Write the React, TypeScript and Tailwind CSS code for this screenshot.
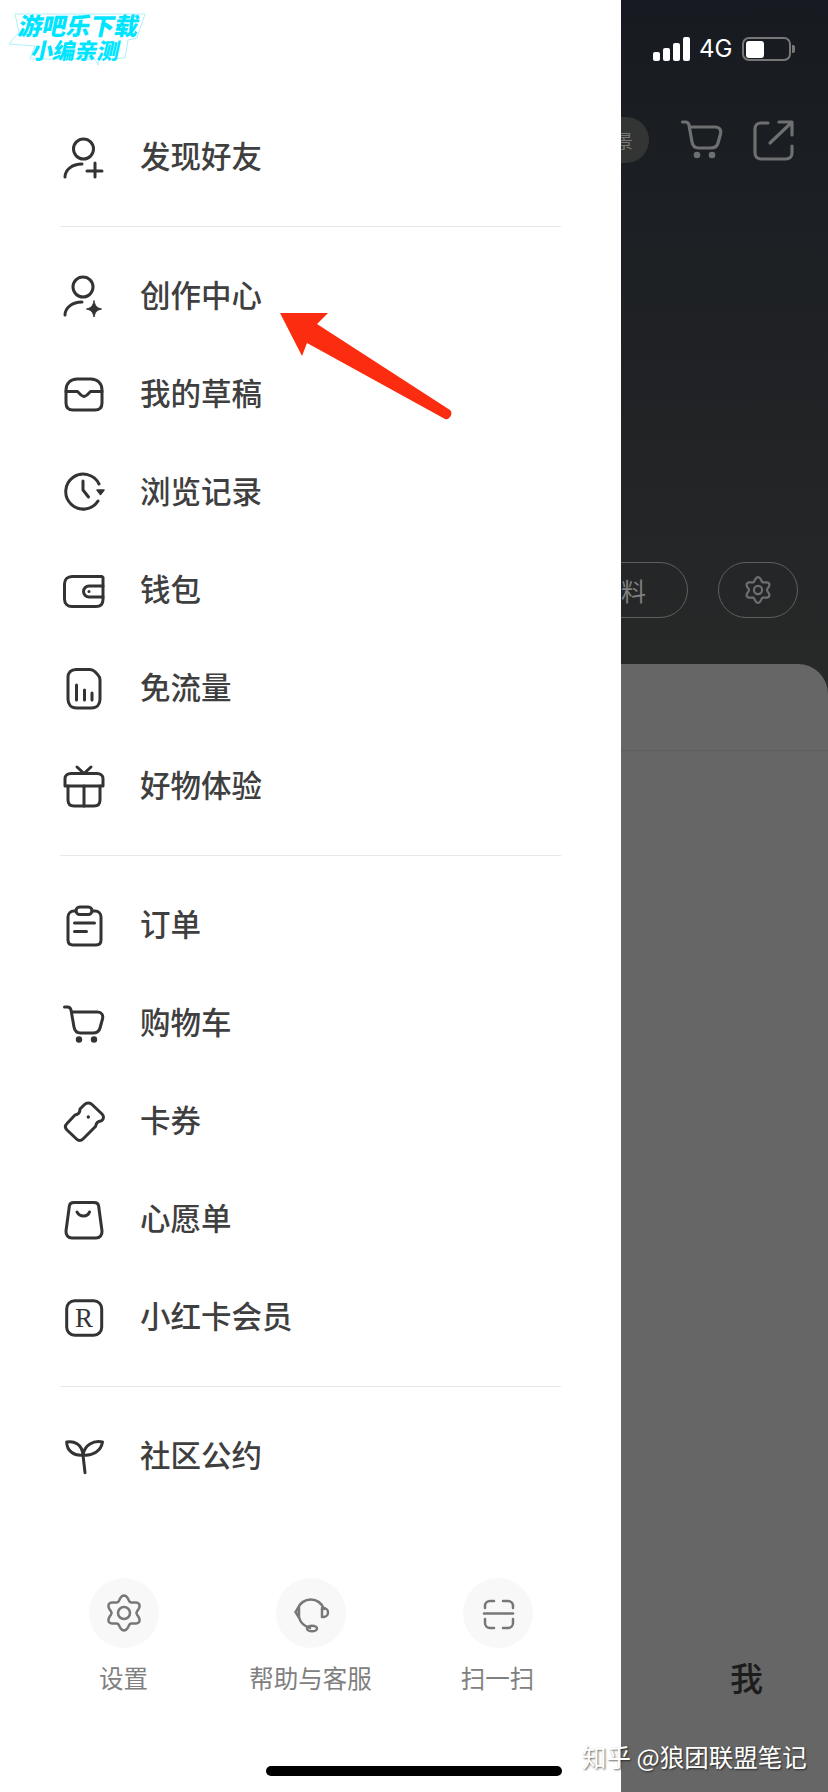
import type { ReactNode } from "react";

const flower = (cx: number, cy: number, r: number, amp: number) => {
  const pts: string[] = [];
  for (let i = 0; i < 120; i++) {
    const t = (i / 120) * Math.PI * 2;
    const rad = r + amp * Math.cos(6 * t);
    pts.push(`${(cx + rad * Math.sin(t)).toFixed(2)} ${(cy - rad * Math.cos(t)).toFixed(2)}`);
  }
  return `M${pts.join("L")}Z`;
};

function Icon({ children, strokeWidth = 3, color = "#333", size = 44 }: { children: ReactNode; strokeWidth?: number; color?: string; size?: number }) {
  return (
    <svg width={size} height={size} viewBox="0 0 44 44" fill="none" stroke={color} strokeWidth={strokeWidth} strokeLinecap="round" strokeLinejoin="round" className="shrink-0">
      {children}
    </svg>
  );
}

const menuIcons: Record<string, ReactNode> = {
  friend: (
    <>
      <circle cx="21.5" cy="14" r="10" />
      <path d="M3 42c0-7 7-13 17-13" />
      <path d="M25 36h15M33 28v14" />
    </>
  ),
  create: (
    <>
      <circle cx="21" cy="13" r="10" />
      <path d="M3 41c0-7 7-13 17-13" />
      <path d="M32 27c1 5 3 7 7.500 8-4.500 1-6.500 3-7.500 8-1-5-3-7-7.500-8 4.500-1 6.500-3 7.500-8z" fill="#333" strokeWidth="1" />
    </>
  ),
  draft: (
    <>
      <path d="M15 7h14c6.500 0 11 4.500 11 11v13c0 4.500-2.500 7-7 7H11c-4.500 0-7-2.500-7-7V18C4 11.500 8.500 7 15 7z" />
      <path d="M4 19.500h11.500l3.500 3.500c2 1.800 4 1.800 6 0l3.500-3.500H40" />
    </>
  ),
  history: (
    <>
      <path d="M37 14A17.500 17.500 0 1 0 36 31" />
      <path d="M21 11v9l5.500 7" />
      <path d="M35 20h7l-3.500 4.500z" fill="#333" strokeWidth="1.500" />
    </>
  ),
  wallet: (
    <>
      <path d="M40 8.500H10c-4.500 0-7.500 3-7.500 7.500v15c0 4.500 3 7.500 7.500 7.500h24c4.500 0 7-2.500 7-7V9.500z" />
      <path d="M41 18H27c-3 0-5.500 2.500-5.500 5.500S24 29 27 29h14" />
      <circle cx="27" cy="23.500" r="1.500" fill="#333" stroke="none" />
    </>
  ),
  data: (
    <>
      <path d="M14 3.500h14c2 0 3.500.7 5 2.200l3 3.300c1.500 1.500 2 3 2 5V33c0 5.500-3 9-8.500 9h-15C9 42 6 38.500 6 33V11.500C6 6.500 9 3.500 14 3.500z" />
      <path d="M14.500 19v15M22.500 24v10M30 27v7" />
    </>
  ),
  gift: (
    <>
      <path d="M9 9.500h26c3.500 0 6 2 6 5v7.500H3v-7.500c0-3 2.500-5 6-5z" />
      <path d="M6 22v14c0 4 2 6 6 6h20c4 0 6-2 6-6V22" />
      <path d="M22 22V42M15 3l7 6.500L29 3" />
    </>
  ),
  order: (
    <>
      <path d="M14 8h-2c-3.500 0-6 2.500-6 6v23c0 3.500 1.500 5 5 5h23c3.500 0 5-1.500 5-5V14c0-3.500-2.500-6-6-6h-3" />
      <rect x="14" y="4" width="16" height="7.500" rx="3.700" />
      <path d="M12.500 20h20M12.500 28.500h12" />
    </>
  ),
  cart: (
    <>
      <path d="M2.500 6h3c2 0 3 1 3.500 3l3 17c.7 4 3 6 6.500 6h12.500c4 0 6.200-2 7-5l2.500-9c1-4-1-7-5-7H9.500" />
      <circle cx="17" cy="38.500" r="1.700" fill="#333" />
      <circle cx="32" cy="38.500" r="1.700" fill="#333" />
    </>
  ),
  coupon: (
    <>
      <path d="M5 24.500l8-8.500c3.500-.3 5-2.500 5-6l4.500-4.500c2-2 5.500-2.200 7.500 0l10 9.500c2 2 2 4.800-.3 6.700-3.500.3-5.700 2-6 5.500L21 40c-2 2-4.500 2-6.500 0L5 31c-2-2-2-4.500 0-6.500z" />
      <circle cx="26.300" cy="18" r="1.700" fill="#333" stroke="none" />
    </>
  ),
  wish: (
    <>
      <path d="M12 5.500h20c3 0 4.500 1.500 4.700 4L40 34c.3 4-2 7-6 7H10c-4 0-6.300-3-6-7L7.300 9.500c.2-2.500 1.700-4 4.700-4z" />
      <path d="M15 15c1.500 2.700 3.500 4 6.500 4s5-1.300 6-4" />
    </>
  ),
  member: (
    <>
      <rect x="4.700" y="5.700" width="35" height="34.500" rx="8" />
      <text x="22" y="32" textAnchor="middle" fontSize="27" fill="#333" stroke="none" fontFamily="'Liberation Serif', serif">R</text>
    </>
  ),
  rule: (
    <>
      <path d="M4.700 8c7-1.500 15.300 2 16.300 13-9 1-16.300-4-16.300-13z" />
      <path d="M40.500 8c-9-2-18 3-19.500 13 10 1 18-4 19.500-13z" />
      <path d="M21 21l2 17.700" />
    </>
  ),
};

const sections = [
  [{ icon: "friend", label: "发现好友" }],
  [
    { icon: "create", label: "创作中心" },
    { icon: "draft", label: "我的草稿" },
    { icon: "history", label: "浏览记录" },
    { icon: "wallet", label: "钱包" },
    { icon: "data", label: "免流量" },
    { icon: "gift", label: "好物体验" },
  ],
  [
    { icon: "order", label: "订单" },
    { icon: "cart", label: "购物车" },
    { icon: "coupon", label: "卡券" },
    { icon: "wish", label: "心愿单" },
    { icon: "member", label: "小红卡会员" },
  ],
  [{ icon: "rule", label: "社区公约" }],
];

function Section({ index }: { index: number }) {
  return (
    <div className={index > 0 ? "mt-[20px] border-t border-[#e8e8e8] pt-[20px]" : ""}>
      {sections[index].map((item) => (
        <div key={item.label} className="flex h-[98px] items-center">
          <div className="ml-[2px] mr-[34px] flex">
            <Icon>{menuIcons[item.icon]}</Icon>
          </div>
          <span className="pb-[4px] text-[30.5px] font-medium leading-none text-[#3f3f3f]">{item.label}</span>
        </div>
      ))}
    </div>
  );
}

function Drawer() {
  const shortcuts = [
    {
      label: "设置",
      icon: (
        <>
          <path d={flower(22, 22, 15, 2.500)} />
          <circle cx="22" cy="22" r="6" />
        </>
      ),
    },
    {
      label: "帮助与客服",
      icon: (
        <>
          <path d="M8.500 18a14 14 0 0 1 26.500 0" />
          <path d="M10 16l-3.500 5 3.500 5.500z" />
          <path d="M33 17h1.500a4.500 4.500 0 0 1 0 9H33z" />
          <path d="M10 26.500c1.500 5 6 9 11 10.500" />
          <ellipse cx="23" cy="37.500" rx="5" ry="2.800" />
        </>
      ),
    },
    {
      label: "扫一扫",
      icon: (
        <>
          <path d="M9 17v-2a5 5 0 0 1 5-5h4M27 10h5a5 5 0 0 1 5 5v2" />
          <path d="M8 22.500h29" />
          <path d="M9 28v4a5 5 0 0 0 5 5h4M27 37h5a5 5 0 0 0 5-5v-4" />
        </>
      ),
    },
  ];

  return (
    <aside className="flex w-[621px] shrink-0 flex-col bg-white">
      <nav className="px-[60px] pt-[108px]">
        {sections.map((_, i) => (
          <Section key={i} index={i} />
        ))}
      </nav>
      <div className="mt-[73px] grid grid-cols-3 px-[30px]">
        {shortcuts.map((s) => (
          <div key={s.label} className="flex flex-col items-center">
            <div className="flex h-[70px] w-[70px] items-center justify-center rounded-full bg-[#f8f8f8]">
              <Icon strokeWidth={2.500} color="#777">{s.icon}</Icon>
            </div>
            <span className="mt-[15px] text-[24.5px] leading-[30px] text-[#808080]">{s.label}</span>
          </div>
        ))}
      </div>
    </aside>
  );
}

function StatusBar() {
  return (
    <div className="flex h-[24px] items-center pl-[32px]">
      <div className="flex items-end gap-[3px]">
        <div className="h-[9px] w-[7px] rounded-[2px] bg-white" />
        <div className="h-[13px] w-[7px] rounded-[2px] bg-white" />
        <div className="h-[18px] w-[7px] rounded-[2px] bg-white" />
        <div className="h-[24px] w-[7px] rounded-[2px] bg-white" />
      </div>
      <span className="ml-[9px] font-['Inter',sans-serif] text-[24px] leading-none text-white">4G</span>
      <div className="ml-[10px] flex h-[24px] w-[49px] items-center rounded-[7px] border-2 border-[#777] pl-[2px]">
        <div className="h-[17px] w-[18px] rounded-[3px] bg-white" />
      </div>
      <div className="ml-[1px] h-[8px] w-[3px] rounded-r-[2px] bg-[#777]" />
    </div>
  );
}

function Backdrop() {
  return (
    <main className="flex min-w-0 flex-1 flex-col overflow-hidden bg-gradient-to-b from-[#171b21] to-[#272828] to-[37%] pt-[37px]">
      <StatusBar />
      <div className="mt-[56px] flex items-center">
        <div className="-ml-[32px] flex h-[46px] w-[60px] items-center justify-end rounded-full bg-[#333535] pr-[16px]">
          <span className="text-[18px] leading-none text-[#777]">景</span>
        </div>
        <div className="ml-[31px]">
          <Icon strokeWidth={3.200} color="#6e6f70">
            <path d="M2.500 4h3c2 0 3 1 3.500 3l3 17c.7 4 3 6 6.500 6h12.500c4 0 6.200-2 7-5l2.500-9c1-4-1-7-5-7H9.500" />
            <circle cx="17" cy="37" r="1.700" fill="#6e6f70" />
            <circle cx="32" cy="37" r="1.700" fill="#6e6f70" />
          </Icon>
        </div>
        <div className="ml-[28px]">
          <Icon strokeWidth={3.200} color="#6e6f70">
            <path d="M16 5H9C5.500 5 3 7.500 3 11v24c0 3.500 2.500 6 6 6h25c3.500 0 6-2.500 6-6v-7" />
            <path d="M18 25L39 5M27 4h13v13" />
          </Icon>
        </div>
      </div>
      <div className="mt-[399px] flex items-center">
        <div className="-ml-[33px] flex h-[56px] w-[100px] items-center justify-end rounded-full border border-[#5f5f5f] pr-[41px]">
          <span className="text-[25px] leading-none text-[#808080]">料</span>
        </div>
        <div className="ml-[30px] flex h-[56px] w-[80px] items-center justify-center rounded-full border border-[#5f5f5f]">
          <Icon strokeWidth={3.200} color="#6e6f70" size={30}>
            <path d={flower(22, 22, 16, 2.800)} />
            <circle cx="22" cy="22" r="6" />
          </Icon>
        </div>
      </div>
      <div className="mt-[46px] flex flex-1 flex-col rounded-tr-[30px] bg-[#666]">
        <div className="h-[87px] border-b border-[#5e5e5e]" />
        <div className="mt-auto mb-[95px] pl-[109px]">
          <span className="text-[33px] font-medium leading-[40px] text-[#1c1c1c]">我</span>
        </div>
      </div>
    </main>
  );
}

export default function App() {
  return (
    <div className="relative flex h-[1792px] w-[828px] overflow-hidden bg-white font-['Noto_Sans_CJK_SC',sans-serif]">
      <Drawer />
      <Backdrop />

      {/* watermark logo */}
      <div className="absolute left-[6px] top-[10px] h-[56px] w-[142px]">
        <svg width="142" height="56" viewBox="0 0 142 56" className="absolute inset-0" fill="#fff" stroke="#aef1fb" strokeWidth="1">
          <path d="M9 4H139l-8 24-9 2-3 18-26 1-1 6-3-6-65 0 5-13-26-2 10-12z" />
        </svg>
        <div className="relative -skew-x-12 text-center font-black leading-none text-[#00e5ff]">
          <div className="pt-[3px] text-[24px] leading-[24px]">游吧乐下载</div>
          <div className="pl-[4px] text-[22px] leading-[24px]">小编亲测</div>
        </div>
      </div>

      {/* annotation arrow */}
      <svg width="828" height="1792" viewBox="0 0 828 1792" className="pointer-events-none absolute inset-0">
        <path d="M280 313H328L317 324L450 410C454 413 449 421 445 419L307 343L302 356Z" fill="#fb2c10" />
      </svg>

      <div className="absolute left-[266px] top-[1766px] h-[10px] w-[296px] rounded-full bg-black" />

      <div className="absolute left-[582px] top-[1742px] whitespace-nowrap text-[24.5px] leading-[30px] text-white [text-shadow:1px_1px_2px_rgba(0,0,0,0.6)]">
        知乎 @狼团联盟笔记
      </div>
    </div>
  );
}
